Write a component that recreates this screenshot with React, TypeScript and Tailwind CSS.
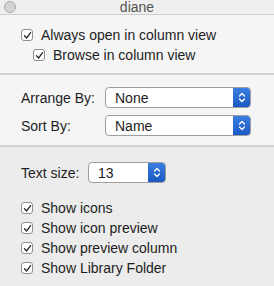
import React from "react";

const Check = ({ className = "" }: { className?: string }) => (
  <div className={`w-[12px] h-[12px] rounded-[3px] border border-[#8e8e8e] bg-white flex items-center justify-center shrink-0 ${className}`}>
    <svg width="9" height="9" viewBox="0 0 9 9" fill="none">
      <path d="M1.5 4.8 L3.6 7 L7.6 1.6" stroke="#2a2a2a" strokeWidth="1.3" strokeLinecap="round" strokeLinejoin="round" />
    </svg>
  </div>
);

const CheckRow = ({ label, className = "" }: { label: string; className?: string }) => (
  <div className={`flex items-center h-[20px] gap-[8px] ${className}`}>
    <Check />
    <span className="text-[14px] text-[#1d1d1d] leading-none">{label}</span>
  </div>
);

const Popup = ({ value, width }: { value: string; width: string }) => (
  <div className={`flex h-[21px] ${width} rounded-[4px] border border-[#9d9d9d] bg-white overflow-hidden`}>
    <div className="flex-1 flex items-center pl-[9px] text-[14px] text-[#1d1d1d] leading-none">{value}</div>
    <div className="w-[17px] bg-gradient-to-b from-[#3b7ee0] to-[#1b58c4] flex items-center justify-center">
      <svg width="8" height="13" viewBox="0 0 8 13" fill="none">
        <path d="M1.5 5 L4 2.5 L6.5 5" stroke="white" strokeWidth="1.3" strokeLinecap="round" strokeLinejoin="round" />
        <path d="M1.5 8 L4 10.5 L6.5 8" stroke="white" strokeWidth="1.3" strokeLinecap="round" strokeLinejoin="round" />
      </svg>
    </div>
  </div>
);

export default function App() {
  return (
    <div className="w-[274px] h-[286px] bg-[#ececec] flex flex-col overflow-hidden" style={{ fontFamily: '"Liberation Sans", Arial, sans-serif' }}>
      <div className="h-[15px] bg-[#efefef] border-b border-[#cdcdcd] flex items-center relative">
        <div className="absolute left-[4px] top-[1px] w-[12px] h-[12px] rounded-full bg-[#d4d4d4] border border-[#a9a9a9]" />
        <div className="flex-1 text-center text-[14px] text-[#555555] leading-none">diane</div>
      </div>
      <div className="bg-[#f5f5f5] border-b-2 border-[#d2d2d2] pt-[10px] pb-[8px] pl-[21px]">
        <CheckRow label="Always open in column view" />
        <CheckRow label="Browse in column view" className="ml-[12px]" />
      </div>
      <div className="bg-[#f5f5f5] border-b-2 border-[#d2d2d2] pt-[12px] pb-[9px] pl-[21px] flex flex-col gap-[7px]">
        <div className="flex items-center">
          <span className="w-[84px] text-[14px] text-[#1d1d1d] leading-none">Arrange By:</span>
          <Popup value="None" width="w-[146px]" />
        </div>
        <div className="flex items-center">
          <span className="w-[84px] text-[14px] text-[#1d1d1d] leading-none">Sort By:</span>
          <Popup value="Name" width="w-[146px]" />
        </div>
      </div>
      <div className="pt-[15px] pl-[21px]">
        <div className="flex items-center">
          <span className="w-[67px] text-[14px] text-[#1d1d1d] leading-none">Text size:</span>
          <Popup value="13" width="w-[78px]" />
        </div>
        <div className="mt-[15px] flex flex-col">
          <CheckRow label="Show icons" className="h-[20.5px]" />
          <CheckRow label="Show icon preview" className="h-[20.5px]" />
          <CheckRow label="Show preview column" className="h-[20.5px]" />
          <CheckRow label="Show Library Folder" className="h-[20.5px]" />
        </div>
      </div>
    </div>
  );
}
